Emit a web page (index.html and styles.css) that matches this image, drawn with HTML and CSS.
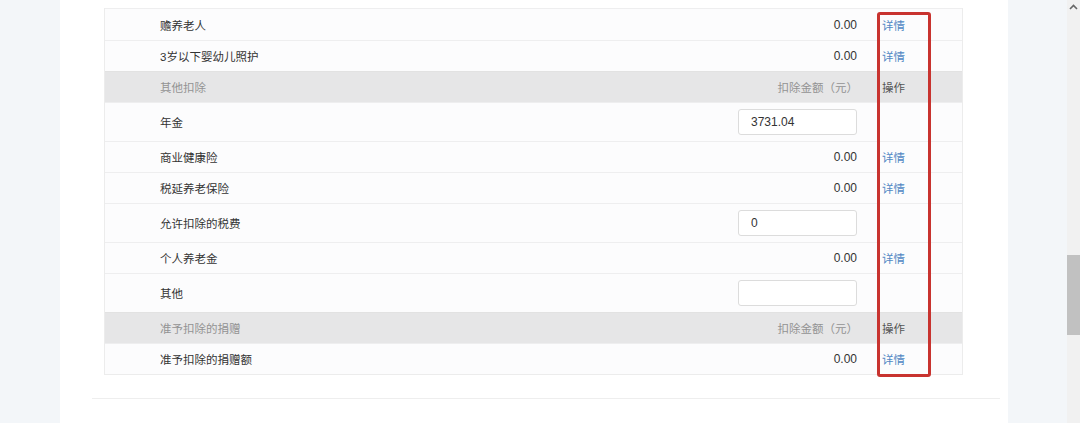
FILE: index.html
```html
<!DOCTYPE html>
<html>
<head>
    <title>扣除项目</title>
    <link rel="stylesheet" href="styles.css">
</head>
<body>
    <div class="page">
        <div class="gutter"></div>
        <div class="panel">
            <div class="table">
                <div class="row first">
                    <div class="label">赡养老人</div>
                    <div class="amount">0.00</div>
                    <div class="op"><a href="#">详情</a></div>
                </div>
                <div class="row">
                    <div class="label">3岁以下婴幼儿照护</div>
                    <div class="amount">0.00</div>
                    <div class="op"><a href="#">详情</a></div>
                </div>
                <div class="row head">
                    <div class="label">其他扣除</div>
                    <div class="amount">扣除金额（元）</div>
                    <div class="op">操作</div>
                </div>
                <div class="row tall">
                    <div class="label">年金</div>
                    <div class="amount"><input type="text" value="3731.04"></div>
                    <div class="op"></div>
                </div>
                <div class="row">
                    <div class="label">商业健康险</div>
                    <div class="amount">0.00</div>
                    <div class="op"><a href="#">详情</a></div>
                </div>
                <div class="row">
                    <div class="label">税延养老保险</div>
                    <div class="amount">0.00</div>
                    <div class="op"><a href="#">详情</a></div>
                </div>
                <div class="row tall">
                    <div class="label">允许扣除的税费</div>
                    <div class="amount"><input type="text" value="0"></div>
                    <div class="op"></div>
                </div>
                <div class="row">
                    <div class="label">个人养老金</div>
                    <div class="amount">0.00</div>
                    <div class="op"><a href="#">详情</a></div>
                </div>
                <div class="row tall">
                    <div class="label">其他</div>
                    <div class="amount"><input type="text" value=""></div>
                    <div class="op"></div>
                </div>
                <div class="row head">
                    <div class="label">准予扣除的捐赠</div>
                    <div class="amount">扣除金额（元）</div>
                    <div class="op">操作</div>
                </div>
                <div class="row">
                    <div class="label">准予扣除的捐赠额</div>
                    <div class="amount">0.00</div>
                    <div class="op"><a href="#">详情</a></div>
                </div>
                <div class="highlight"></div>
            </div>
            <div class="footer"></div>
        </div>
        <div class="side"></div>
        <div class="scrollbar">
            <div class="arrow">
                <svg width="9" height="6" viewBox="0 0 9 6"><path d="M1 5 L4.5 1.5 L8 5" fill="none" stroke="#666" stroke-width="1.6"/></svg>
            </div>
            <div class="thumb"></div>
        </div>
    </div>
</body>
</html>
```

FILE: styles.css
```css
body {
    margin: 0;
    background: #f3f6f9;
    font-family: "Liberation Sans", "Noto Sans CJK SC", sans-serif;
    font-size: 11.5px;
    color: #333;
}
.page {
    display: flex;
    height: 423px;
    overflow: hidden;
}
.gutter {
    width: 60px;
}
.panel {
    width: 948px;
    background: #fff;
    padding-top: 8px;
}
.side {
    flex: 1;
}
.table {
    position: relative;
    box-sizing: border-box;
    margin-left: 44px;
    width: 859px;
    border: 1px solid #ececec;
    border-top: 0;
    background: #fcfcfd;
}
.row {
    display: flex;
    align-items: center;
    height: 30px;
    border-top: 1px solid #eeeeef;
}
.row.first {
    height: 31px;
}
.row.tall {
    height: 38px;
}
.row.head {
    background: #e6e6e7;
    color: #939393;
    border-top-color: #e2e2e2;
}
.head .op {
    color: #555;
}
.label {
    flex: 1;
    padding-left: 55px;
}
.amount {
    width: 200px;
    text-align: right;
    padding-right: 15px;
    font-size: 12px;
}
.head .amount {
    font-size: 11.5px;
    padding-right: 14px;
}
.op {
    box-sizing: border-box;
    width: 90px;
    padding-left: 10px;
}
.op a {
    color: #5289c4;
    text-decoration: none;
}
input[type="text"] {
    box-sizing: border-box;
    width: 119px;
    height: 26px;
    border: 1px solid #dcdcdc;
    border-radius: 3px;
    padding: 0 12px;
    font-family: "Liberation Sans", sans-serif;
    font-size: 12px;
    color: #333;
    background: #fff;
    text-align: left;
}
.highlight {
    position: absolute;
    left: 772px;
    top: 4px;
    width: 48px;
    height: 359px;
    border: 3px solid #c8332f;
    border-radius: 3px;
}
.footer {
    margin: 23px 8px 0 32px;
    border-top: 1px solid #eeeeee;
}
.scrollbar {
    width: 13px;
    background: #f1f1f1;
    display: flex;
    flex-direction: column;
    align-items: center;
}
.arrow {
    height: 14px;
    display: flex;
    align-items: center;
}
.thumb {
    margin-top: 241px;
    width: 13px;
    height: 80px;
    background: #c1c1c1;
}
```
